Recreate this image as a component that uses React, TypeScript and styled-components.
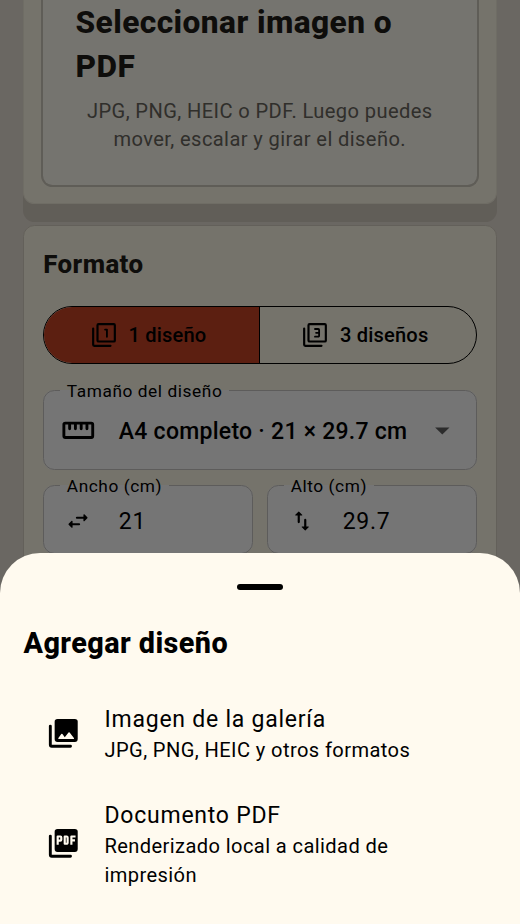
import React from "react";
import styled, { createGlobalStyle } from "styled-components";

const GlobalStyle = createGlobalStyle`
  *, *::before, *::after { box-sizing: border-box; }
  body { margin: 0; background: #e8e0d6; font-family: Roboto, "Noto Sans", sans-serif; color: #000; }
`;

const Screen = styled.div`
  position: relative;
  width: 520px;
  height: 924px;
  overflow: hidden;
  background: #e8e0d6;
`;

const Page = styled.main`
  display: flex;
  flex-direction: column;
  gap: 21.5px;
  padding: 0 23.5px 0 23px;
`;

const Card = styled.section<{ $first?: boolean }>`
  padding: ${(p) => (p.$first ? "0 16.5px 16px" : "23px 19px 60px 19.3px")};
  height: ${(p) => (p.$first ? "203.5px" : "auto")};
  background: #fffbea;
  border: 1.4px solid ${(p) => (p.$first ? "#f2eddc" : "#d8d1c4")};
  border-top-width: ${(p) => (p.$first ? 0 : "1.4px")};
  border-radius: ${(p) => (p.$first ? "0 0 11.5px 11.5px" : "11.5px")};
  box-shadow: ${(p) => (p.$first ? "0 18px 0 #d4ccc1" : "none")};
`;

const UploadPanel = styled.div`
  height: 187px;
  border: 2px solid #cfcabe;
  border-top: 0;
  border-radius: 0 0 11.5px 11.5px;
  background: #fffcf1;
  padding: 0 33px;
`;

const UploadTitle = styled.h1`
  margin: 0;
  padding-top: 0.6px;
  font-size: 31.7px;
  line-height: 44.5px;
  font-weight: 800;
  letter-spacing: 0.42px;
  color: #1f1d18;
`;

const UploadHint = styled.p`
  margin: 8.8px 0 0;
  text-align: center;
  font-size: 20.1px;
  line-height: 27.6px;
  letter-spacing: 0.4px;
  color: #69665f;
  white-space: nowrap;
`;

const SectionTitle = styled.h2`
  margin: 0;
  font-size: 25.9px;
  line-height: 30px;
  font-weight: 800;
  letter-spacing: 0.4px;
  color: #1f1d18;
`;

const Segments = styled.div`
  display: grid;
  grid-template-columns: 1fr 1fr;
  height: 58px;
  margin-top: 27px;
  border: 1.5px solid #000;
  border-radius: 29px;
  overflow: hidden;
`;

const Segment = styled.div<{ $active?: boolean }>`
  display: flex;
  align-items: center;
  justify-content: center;
  gap: 11.5px;
  padding-right: ${(p) => (p.$active ? "5.8px" : "4.5px")};
  font-size: 20.1px;
  font-weight: 500;
  letter-spacing: 0.17px;
  background: ${(p) => (p.$active ? "#c84427" : "transparent")};
  border-right: ${(p) => (p.$active ? "1.5px solid #000" : "0")};
`;

const Field = styled.fieldset<{ $h: number; $large?: boolean }>`
  display: flex;
  min-width: 0;
  margin: 0;
  height: ${(p) => p.$h}px;
  padding: ${(p) => (p.$large ? "12.5px 16px 0" : "0 16px")};
  border: 1.5px solid #cbc9c6;
  border-radius: 11.5px;
  background: #fff;
`;

const Legend = styled.legend`
  padding: 0 6.5px;
  font-size: 17.3px;
  line-height: 20px;
  letter-spacing: 0.57px;
`;

const FieldRow = styled.div<{ $large?: boolean }>`
  display: flex;
  flex: 1;
  align-items: center;
  height: ${(p) => (p.$large ? "35px" : "50.5px")};
`;

const Value = styled.span<{ $bold?: boolean }>`
  flex: 1;
  padding-top: 2px;
  font-size: 23px;
  line-height: 28px;
  font-weight: ${(p) => (p.$bold ? 500 : 400)};
  letter-spacing: ${(p) => (p.$bold ? "0.26px" : "0.72px")};
  white-space: nowrap;
`;

const FieldIcon = styled.span`
  display: flex;
  justify-content: center;
  width: 35px;
  margin-right: 23.5px;
`;

const FieldStack = styled.div`
  display: flex;
  flex-direction: column;
  gap: 5.3px;
  margin-top: 16.7px;
`;

const FieldPair = styled.div`
  display: grid;
  grid-template-columns: 1fr 1fr;
  gap: 14.5px;
`;

const Scrim = styled.div`
  position: absolute;
  inset: 0;
  display: flex;
  flex-direction: column;
  justify-content: flex-end;
  background: rgba(0, 0, 0, 0.54);
`;

const Sheet = styled.section`
  display: flex;
  flex-direction: column;
  height: 371px;
  border-radius: 40px 40px 0 0;
  background: #fffaef;
  padding: 31.4px 23.5px 0;
`;

const Handle = styled.div`
  align-self: center;
  width: 46px;
  height: 6px;
  border-radius: 3px;
  background: #000;
`;

const SheetTitle = styled.h2`
  margin: 34.2px 0 0;
  font-size: 28.8px;
  line-height: 36px;
  font-weight: 800;
  letter-spacing: 0.43px;
`;

const OptionList = styled.div`
  display: flex;
  flex-direction: column;
  gap: 34px;
  padding: 42px 0 0 22px;
`;

const Option = styled.div<{ $lines: number }>`
  display: flex;
  align-items: center;
  gap: 24.4px;
  height: ${(p) => (p.$lines === 2 ? 62 : 89)}px;
`;

const OptionText = styled.div`
  display: flex;
  flex-direction: column;
  align-self: flex-start;
`;

const OptionTitle = styled.span`
  font-size: 23px;
  line-height: 33.4px;
  letter-spacing: 0.76px;
`;

const OptionDetail = styled.span`
  max-width: 320px;
  font-size: 20.1px;
  line-height: 28.8px;
  letter-spacing: 0.4px;
`;

const Icon = styled.svg<{ $size: number }>`
  display: block;
  flex: none;
  width: ${(p) => p.$size}px;
  height: ${(p) => p.$size}px;
`;

const Stroke = ({ children }: { children: React.ReactNode }) => (
  <g fill="none" stroke="currentColor" strokeWidth="2" strokeLinecap="round" strokeLinejoin="round">
    {children}
  </g>
);

const CountIcon = ({ digit }: { digit: string }) => (
  <Icon $size={26} viewBox="0 0 24 24">
    <Stroke>
      <rect x="6" y="2" width="16" height="16" rx="1" />
      <path d="M2 6v15a1 1 0 0 0 1 1h15" />
      <path strokeWidth="1.7" d={digit} />
    </Stroke>
  </Icon>
);

const RulerIcon = () => (
  <Icon $size={34.6} viewBox="0 0 24 24">
    <Stroke>
      <rect x="2" y="7" width="20" height="10" rx="1" />
      <path d="M6 8v3M10 8v3M14 8v3M18 8v3" />
    </Stroke>
  </Icon>
);

const SwapPath =
  "M6.14 11.86l-2.78 2.79a.5.5 0 0 0 0 .7l2.78 2.79c.31.32.85.1.85-.35V16H13a1 1 0 1 0 0-2H6.99v-1.79c0-.45-.54-.67-.85-.35zM20.65 8.65l-2.78-2.79c-.31-.32-.85-.1-.85.35V8H11a1 1 0 1 0 0 2h6.01v1.79c0 .45.54.67.85.35l2.78-2.79a.5.5 0 0 0 .01-.7z";

const SwapIcon = ({ vertical }: { vertical?: boolean }) => (
  <Icon $size={26} viewBox="0 0 24 24">
    <path d={SwapPath} transform={vertical ? "rotate(90 12 12)" : undefined} />
  </Icon>
);

const CaretIcon = () => (
  <Icon $size={34.6} viewBox="0 0 24 24">
    <path fill="#616161" d="M7 10l5 5 5-5z" />
  </Icon>
);

const StackIcon = ({ children }: { children: React.ReactNode }) => (
  <Icon $size={34.6} viewBox="0 0 24 24">
    <rect x="6" y="2" width="16" height="16" rx="2" />
    <Stroke>
      <path d="M3 7v13a1 1 0 0 0 1 1h13" />
    </Stroke>
    {children}
  </Icon>
);

const GalleryIcon = () => (
  <StackIcon>
    <path fill="#fffaef" d="M11.4 12.53l1.63 2.18 2.58-3.22a.5.5 0 0 1 .78 0l2.96 3.7a.5.5 0 0 1-.39.81H9a.5.5 0 0 1-.4-.8l2-2.67a.5.5 0 0 1 .8 0z" />
  </StackIcon>
);

const PdfIcon = () => (
  <StackIcon>
    <path
      fill="none"
      stroke="#fffaef"
      strokeWidth="1.5"
      strokeLinejoin="round"
      d="M8.1 13V7.3h1.9a.6.6 0 0 1 .6.6v1.7a.6.6 0 0 1-.6.6H8.1M13 7.3h1.3a.7.7 0 0 1 .7.7v3.6a.7.7 0 0 1-.7.7H13zM17.6 13V7.3h2.9M17.6 10h2.5"
    />
  </StackIcon>
);

export default function App() {
  return (
    <Screen>
      <GlobalStyle />
      <Page>
        <Card $first>
          <UploadPanel>
            <UploadTitle>Seleccionar imagen o PDF</UploadTitle>
            <UploadHint>
              JPG, PNG, HEIC o PDF. Luego puedes
              <br />
              mover, escalar y girar el diseño.
            </UploadHint>
          </UploadPanel>
        </Card>
        <Card>
          <SectionTitle>Formato</SectionTitle>
          <Segments>
            <Segment $active>
              <CountIcon digit="M13 7h1.7v6.6" />
              1 diseño
            </Segment>
            <Segment>
              <CountIcon digit="M12 6.5H15a.8.8 0 0 1 .8.8v5.4a.8.8 0 0 1-.8.8H12M13 10h2.5" />
              3 diseños
            </Segment>
          </Segments>
          <FieldStack>
            <Field $h={89.8} $large>
              <Legend>Tamaño del diseño</Legend>
              <FieldRow $large>
                <FieldIcon>
                  <RulerIcon />
                </FieldIcon>
                <Value $bold>A4 completo · 21 × 29.7 cm</Value>
                <CaretIcon />
              </FieldRow>
            </Field>
            <FieldPair>
              <Field $h={78}>
                <Legend>Ancho (cm)</Legend>
                <FieldRow>
                  <FieldIcon>
                    <SwapIcon />
                  </FieldIcon>
                  <Value>21</Value>
                </FieldRow>
              </Field>
              <Field $h={78}>
                <Legend>Alto (cm)</Legend>
                <FieldRow>
                  <FieldIcon>
                    <SwapIcon vertical />
                  </FieldIcon>
                  <Value>29.7</Value>
                </FieldRow>
              </Field>
            </FieldPair>
          </FieldStack>
        </Card>
      </Page>
      <Scrim>
        <Sheet>
          <Handle />
          <SheetTitle>Agregar diseño</SheetTitle>
          <OptionList>
            <Option $lines={2}>
              <GalleryIcon />
              <OptionText>
                <OptionTitle>Imagen de la galería</OptionTitle>
                <OptionDetail>JPG, PNG, HEIC y otros formatos</OptionDetail>
              </OptionText>
            </Option>
            <Option $lines={3}>
              <PdfIcon />
              <OptionText>
                <OptionTitle>Documento PDF</OptionTitle>
                <OptionDetail>Renderizado local a calidad de impresión</OptionDetail>
              </OptionText>
            </Option>
          </OptionList>
        </Sheet>
      </Scrim>
    </Screen>
  );
}
